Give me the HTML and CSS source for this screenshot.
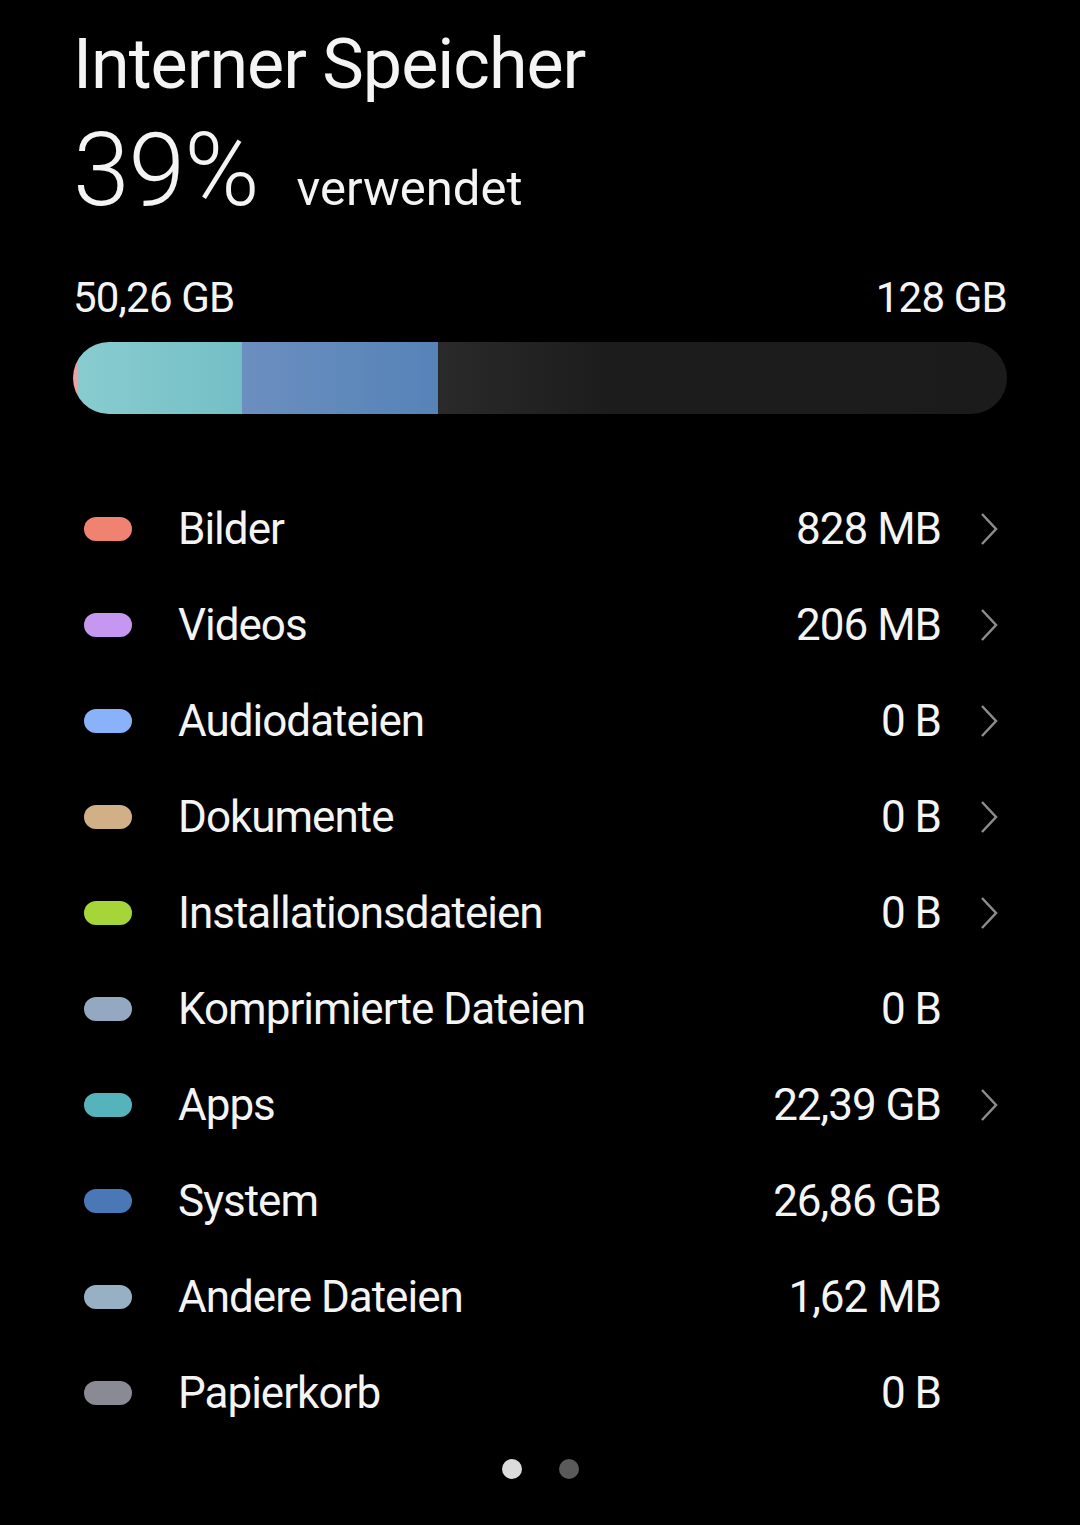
FILE: index.html
```html
<!DOCTYPE html>
<html lang="de">
<head>
<meta charset="UTF-8">
<title>Interner Speicher</title>
<link rel="stylesheet" href="styles.css">
</head>
<body>
<div class="container">
  <h1>Interner Speicher</h1>
  <div class="usage">
    <span class="percent">39%</span>
    <span class="used">verwendet</span>
  </div>
  <div class="totals">
    <span>50,26 GB</span>
    <span>128 GB</span>
  </div>
  <div class="bar">
    <div class="seg seg-pics" style="width:4px"></div>
    <div class="seg seg-apps" style="width:165px"></div>
    <div class="seg seg-sys" style="width:196px"></div>
    <div class="seg seg-free"></div>
  </div>

  <ul class="list">
    <li class="row"><span class="dot" style="background:#f08272"></span><span class="label">Bilder</span><span class="size">828 MB</span><span class="chev"><svg viewBox="0 0 20 34" width="20" height="34"><path d="M3 2 L17 17 L3 32" /></svg></span></li>
    <li class="row"><span class="dot" style="background:#c597f0"></span><span class="label">Videos</span><span class="size">206 MB</span><span class="chev"><svg viewBox="0 0 20 34" width="20" height="34"><path d="M3 2 L17 17 L3 32" /></svg></span></li>
    <li class="row"><span class="dot" style="background:#8ab2fa"></span><span class="label">Audiodateien</span><span class="size">0 B</span><span class="chev"><svg viewBox="0 0 20 34" width="20" height="34"><path d="M3 2 L17 17 L3 32" /></svg></span></li>
    <li class="row"><span class="dot" style="background:#d2b087"></span><span class="label">Dokumente</span><span class="size">0 B</span><span class="chev"><svg viewBox="0 0 20 34" width="20" height="34"><path d="M3 2 L17 17 L3 32" /></svg></span></li>
    <li class="row"><span class="dot" style="background:#a6d53a"></span><span class="label">Installationsdateien</span><span class="size">0 B</span><span class="chev"><svg viewBox="0 0 20 34" width="20" height="34"><path d="M3 2 L17 17 L3 32" /></svg></span></li>
    <li class="row"><span class="dot" style="background:#94a8c2"></span><span class="label">Komprimierte Dateien</span><span class="size">0 B</span><span class="chev"></span></li>
    <li class="row"><span class="dot" style="background:#55b4bb"></span><span class="label">Apps</span><span class="size">22,39 GB</span><span class="chev"><svg viewBox="0 0 20 34" width="20" height="34"><path d="M3 2 L17 17 L3 32" /></svg></span></li>
    <li class="row"><span class="dot" style="background:#4a78b6"></span><span class="label">System</span><span class="size">26,86 GB</span><span class="chev"></span></li>
    <li class="row"><span class="dot" style="background:#98b0c4"></span><span class="label">Andere Dateien</span><span class="size">1,62 MB</span><span class="chev"></span></li>
    <li class="row"><span class="dot" style="background:#8a8a94"></span><span class="label">Papierkorb</span><span class="size">0 B</span><span class="chev"></span></li>
  </ul>

  <div class="pager">
    <span class="pdot active"></span>
    <span class="pdot"></span>
  </div>
</div>
</body>
</html>
```

FILE: styles.css
```css
:root {
  --bg: #000;
  --fg: #f4f4f4;
  --muted: #8c8c8c;
}
body {
  margin: 0;
  background: var(--bg);
  color: var(--fg);
  font-family: Roboto, "Noto Sans", sans-serif;
}
.container {
  padding: 22px 73px 0 73px;
}
h1 {
  margin: 0;
  font-size: 70px;
  font-weight: 400;
  line-height: 84px;
  letter-spacing: -1px;
}
.usage {
  display: flex;
  align-items: baseline;
  gap: 38px;
  margin-top: 4px;
  height: 130px;
}
.percent {
  font-size: 102px;
  font-weight: 300;
  line-height: 120px;
  letter-spacing: -1px;
}
.used {
  font-size: 49px;
  font-weight: 400;
}
.totals {
  display: flex;
  justify-content: space-between;
  font-size: 42px;
  line-height: 52px;
  margin-top: 32px;
  letter-spacing: -0.8px;
}
.bar {
  display: flex;
  height: 72px;
  margin-top: 18px;
  border-radius: 36px;
  overflow: hidden;
}
.seg { height: 100%; }
.seg-pics { background: #f4a0a0; }
.seg-apps { background: linear-gradient(90deg, #88cccf, #74bfc6); }
.seg-sys { background: linear-gradient(90deg, #6b8fbf, #5683b8); }
.seg-free { flex: 1; background: linear-gradient(90deg, #2a2a2a, #1c1c1c 30%, #1b1b1b); }
.list {
  list-style: none;
  margin: 67px 0 0 0;
  padding: 0;
}
.row {
  display: flex;
  align-items: center;
  height: 96px;
  font-size: 44px;
  letter-spacing: -1px;
}
.dot {
  width: 48px;
  height: 24px;
  border-radius: 12px;
  margin-left: 11px;
  margin-right: 46px;
  flex: none;
}
.label { flex: 1; }
.size { text-align: right; }
.chev {
  width: 66px;
  display: flex;
  justify-content: flex-end;
  padding-right: 8px;
  box-sizing: border-box;
}
.chev path {
  fill: none;
  stroke: var(--muted);
  stroke-width: 2.5;
}
.pager {
  display: flex;
  justify-content: center;
  gap: 37px;
  margin-top: 18px;
}
.pdot {
  width: 20px;
  height: 20px;
  border-radius: 50%;
  background: #5a5a5a;
}
.pdot.active { background: #dcdcdc; }
```
